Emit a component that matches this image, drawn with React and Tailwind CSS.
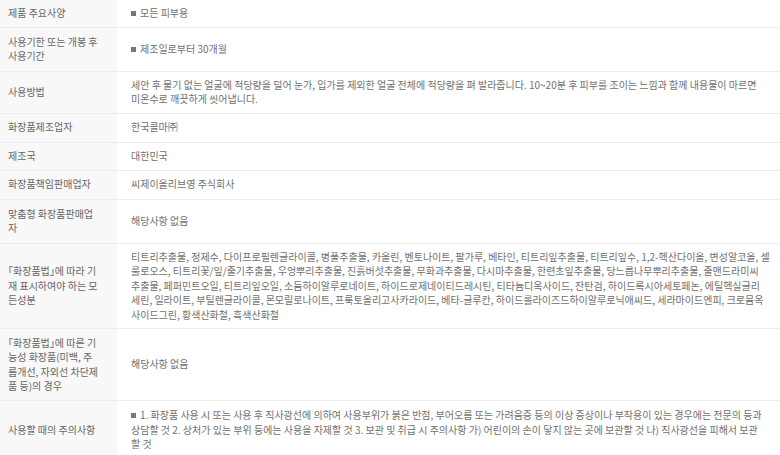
import React from 'react';

const Open = () => <span className="[font-feature-settings:'halt']">「</span>;
const Close = () => <span className="[font-feature-settings:'halt']">」</span>;
const Square = () => (
  <span className="inline-block w-[5px] h-[5px] bg-[#777] mr-[4px] align-[1px]" />
);

// lines broken where the original page wraps them
const Lines = ({ lines }) => (
  <>
    {lines.map((line, i) => (
      <div key={i} className="whitespace-nowrap">
        {line}
      </div>
    ))}
  </>
);

const rows = [
  {
    label: '제품 주요사양',
    value: (
      <>
        <Square />
        모든 피부용
      </>
    ),
    h: 'h-[24px]',
  },
  {
    label: '사용기한 또는 개봉 후 사용기간',
    value: (
      <>
        <Square />
        제조일로부터 30개월
      </>
    ),
    h: 'h-[44px]',
  },
  {
    label: '사용방법',
    value: (
      <Lines
        lines={[
          '세안 후 물기 없는 얼굴에 적당량을 덜어 눈가, 입가를 제외한 얼굴 전체에 적당량을 펴 발라줍니다. 10~20분 후 피부를 조이는 느낌과 함께 내용물이 마르면',
          '미온수로 깨끗하게 씻어냅니다.',
        ]}
      />
    ),
    h: 'h-[42px]',
  },
  { label: '화장품제조업자', value: '한국콜마㈜', h: 'h-[29px]' },
  { label: '제조국', value: '대한민국', h: 'h-[28px]' },
  { label: '화장품책임판매업자', value: '씨제이올리브영 주식회사', h: 'h-[29px]' },
  { label: '맞춤형 화장품판매업자', value: '해당사항 없음', h: 'h-[44px]' },
  {
    label: (
      <>
        <Open />
        화장품법
        <Close />에 따라 기재 표시하여야 하는 모든성분
      </>
    ),
    value: (
      <Lines
        lines={[
          '티트리추출물, 정제수, 다이프로필렌글라이콜, 병풀추출물, 카올린, 벤토나이트, 팔가루, 베타인, 티트리잎추출물, 티트리잎수, 1,2-헥산다이올, 변성알코올, 셀',
          '룰로오스, 티트리꽃/잎/줄기추출물, 우엉뿌리추출물, 진흙버섯추출물, 무화과추출물, 다시마추출물, 한련초잎추출물, 당느릅나무뿌리추출물, 줄맨드라미씨',
          '추출물, 페퍼민트오일, 티트리잎오일, 소듐하이알루로네이트, 하이드로제네이티드레시틴, 티타늄디옥사이드, 잔탄검, 하이드록시아세토페논, 에틸헥실글리',
          '세린, 일라이트, 부틸렌글라이콜, 몬모릴로나이트, 프룩토올리고사카라이드, 베타-글루칸, 하이드롤라이즈드하이알루로닉애씨드, 세라마이드엔피, 크로뮴옥',
          '사이드그린, 황색산화철, 흑색산화철',
        ]}
      />
    ),
    h: 'h-[85px]',
  },
  {
    label: (
      <>
        <Open />
        화장품법
        <Close />에 따른 기능성 화장품(미백, 주름개선, 자외선 차단제품 등)의 경우
      </>
    ),
    value: '해당사항 없음',
    h: 'h-[72px]',
  },
  {
    label: '사용할 때의 주의사항',
    value: (
      <Lines
        lines={[
          <>
            <Square />
            1. 화장품 사용 시 또는 사용 후 직사광선에 의하여 사용부위가 붉은 반점, 부어오름 또는 가려움증 등의 이상 증상이나 부작용이 있는 경우에는 전문의 등과
          </>,
          '상담할 것 2. 상처가 있는 부위 등에는 사용을 자제할 것 3. 보관 및 취급 시 주의사항 가) 어린이의 손이 닿지 않는 곳에 보관할 것 나) 직사광선을 피해서 보관',
          '할 것',
        ]}
      />
    ),
    h: 'h-[59px]',
  },
];

export default function App() {
  return (
    <div
      className="w-[780px] h-[455px] overflow-hidden bg-white text-[10px] leading-[14.5px] text-[#707070]"
      style={{ fontFamily: '"Noto Sans CJK KR", "Noto Sans", sans-serif' }}
    >
      <table className="w-full border-collapse table-fixed">
        <colgroup>
          <col className="w-[117px]" />
          <col />
        </colgroup>
        <tbody>
          {rows.map((row, i) => (
            <tr key={i} className="border-b border-[#ececec]">
              <td
                className={`bg-[#f8f8f8] pl-[8px] pr-[17px] py-[6px] align-middle text-[#666] ${row.h}`}
              >
                {row.label}
              </td>
              <td className={`pl-[14px] pr-[4px] py-[6px] align-middle ${row.h}`}>
                {row.value}
              </td>
            </tr>
          ))}
        </tbody>
      </table>
    </div>
  );
}
